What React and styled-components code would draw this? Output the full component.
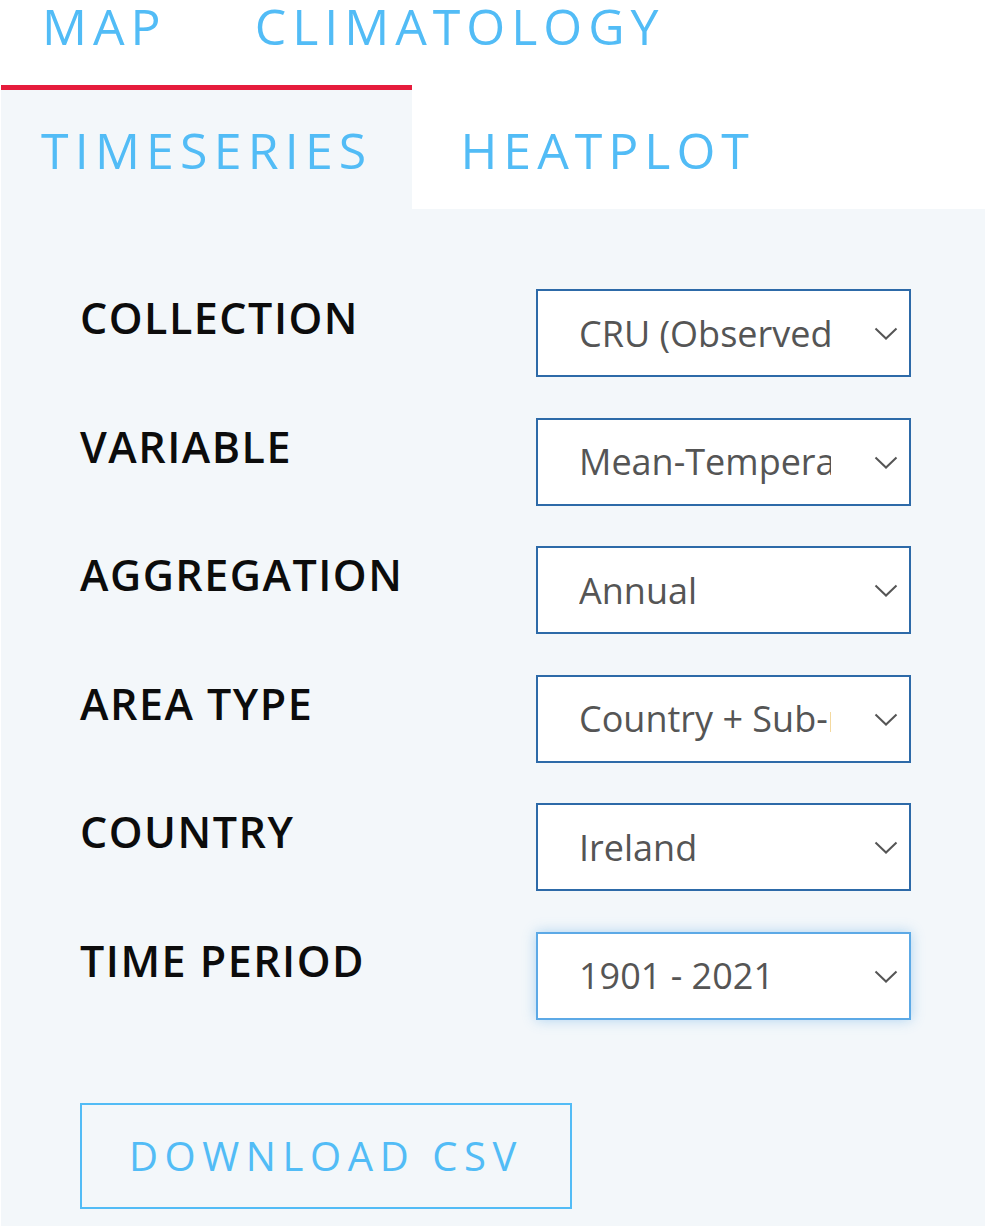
import React from 'react';
import styled, { createGlobalStyle } from 'styled-components';

const colors = {
  sky: '#52bcf6',
  red: '#e61c3c',
  panel: '#f3f7fa',
  navy: '#2d6aa8',
  focus: '#5ca9e6',
  ink: '#0c0c0c',
  grey: '#555555',
};

const GlobalStyle = createGlobalStyle`
  html, body {
    margin: 0;
    padding: 0;
    background: #ffffff;
  }
  body {
    font-family: "Open Sans", "Noto Sans", sans-serif;
  }
`;

const Page = styled.div`
  width: 986px;
  box-sizing: border-box;
  padding: 0 1px 1px;
  margin-top: -39px;
  overflow: hidden;
`;

const TabBar = styled.nav`
  display: flex;
  flex-wrap: wrap;
  background: #ffffff;
`;

const Tab = styled.div`
  display: flex;
  align-items: center;
  box-sizing: border-box;
  height: 124px;
  padding: 0 ${p => p.$right}px 0 ${p => p.$left}px;
  border-top: 5px solid ${p => (p.$active ? colors.red : 'transparent')};
  background: ${p => (p.$active ? colors.panel : '#ffffff')};
  color: ${colors.sky};
  font-size: 50px;
  line-height: 1;
  letter-spacing: ${p => p.$spacing || 6}px;
  text-transform: uppercase;
  cursor: pointer;
`;

const Panel = styled.section`
  background: ${colors.panel};
  padding: 80px 74px 18px 79px;
`;

const Fields = styled.div`
  display: flex;
  flex-direction: column;
  gap: 40.6px;
`;

const FieldRow = styled.div`
  display: flex;
  align-items: flex-start;
  height: 88px;
`;

const Label = styled.label`
  width: 456px;
  flex-shrink: 0;
  margin-top: -1px;
  color: ${colors.ink};
  font-size: 43px;
  font-weight: 600;
  letter-spacing: 1.5px;
  text-transform: uppercase;
`;

const SelectWrap = styled.div`
  position: relative;
  flex-shrink: 0;
  width: 375px;
  height: 88px;
`;

const Select = styled.select`
  appearance: none;
  -webkit-appearance: none;
  width: 100%;
  height: 100%;
  box-sizing: border-box;
  margin: 0;
  padding: 0 78px 0 41px;
  border: 2px solid ${p => (p.$focused ? colors.focus : colors.navy)};
  border-radius: 0;
  background: #ffffff;
  box-shadow: ${p => (p.$focused ? '0 0 12px rgba(92, 169, 230, 0.45)' : 'none')};
  color: ${colors.grey};
  font-family: "Open Sans", "Noto Sans", sans-serif;
  font-size: 36px;
  outline: none;
`;

const Chevron = styled.svg`
  position: absolute;
  right: 13px;
  top: 38px;
  pointer-events: none;
`;

const DownloadButton = styled.button`
  display: block;
  margin-top: 83px;
  width: 492px;
  height: 106px;
  box-sizing: border-box;
  border: 2px solid ${colors.sky};
  background: transparent;
  color: ${colors.sky};
  font-family: "Open Sans", "Noto Sans", sans-serif;
  font-size: 40px;
  letter-spacing: 6.6px;
  padding: 0;
  text-transform: uppercase;
  cursor: pointer;
`;

const tabs = [
  { name: 'Map', left: 41, right: 46 },
  { name: 'Climatology', left: 42, right: 42 },
  { name: 'Timeseries', left: 40, right: 40, spacing: 6.2, active: true },
  { name: 'Heatplot', left: 48, right: 44 },
];

const fields = [
  { label: 'Collection', options: ['CRU (Observed)', 'CMIP6 (Projected)'] },
  { label: 'Variable', options: ['Mean-Temperature', 'Precipitation'] },
  { label: 'Aggregation', options: ['Annual', 'Seasonal', 'Monthly'] },
  { label: 'Area Type', options: ['Country + Sub-national', 'Country'] },
  { label: 'Country', options: ['Ireland', 'France', 'Spain'] },
  { label: 'Time Period', options: ['1901 - 2021', '1991 - 2020'], focused: true },
];

function ChevronIcon() {
  return (
    <Chevron width="24" height="13" viewBox="0 0 24 13">
      <polyline points="1.5,1.5 12,11.5 22.5,1.5" fill="none" stroke="#555" strokeWidth="2" />
    </Chevron>
  );
}

function App() {
  return (
    <Page>
      <GlobalStyle />
      <TabBar>
        {tabs.map(tab => (
          <Tab
            key={tab.name}
            $active={tab.active}
            $left={tab.left}
            $right={tab.right}
            $spacing={tab.spacing}
          >
            {tab.name}
          </Tab>
        ))}
      </TabBar>
      <Panel>
        <Fields>
          {fields.map(field => (
            <FieldRow key={field.label}>
              <Label>{field.label}</Label>
              <SelectWrap>
                <Select $focused={field.focused} defaultValue={field.options[0]}>
                  {field.options.map(opt => (
                    <option key={opt}>{opt}</option>
                  ))}
                </Select>
                <ChevronIcon />
              </SelectWrap>
            </FieldRow>
          ))}
        </Fields>
        <DownloadButton>Download CSV</DownloadButton>
      </Panel>
    </Page>
  );
}

export default App;
